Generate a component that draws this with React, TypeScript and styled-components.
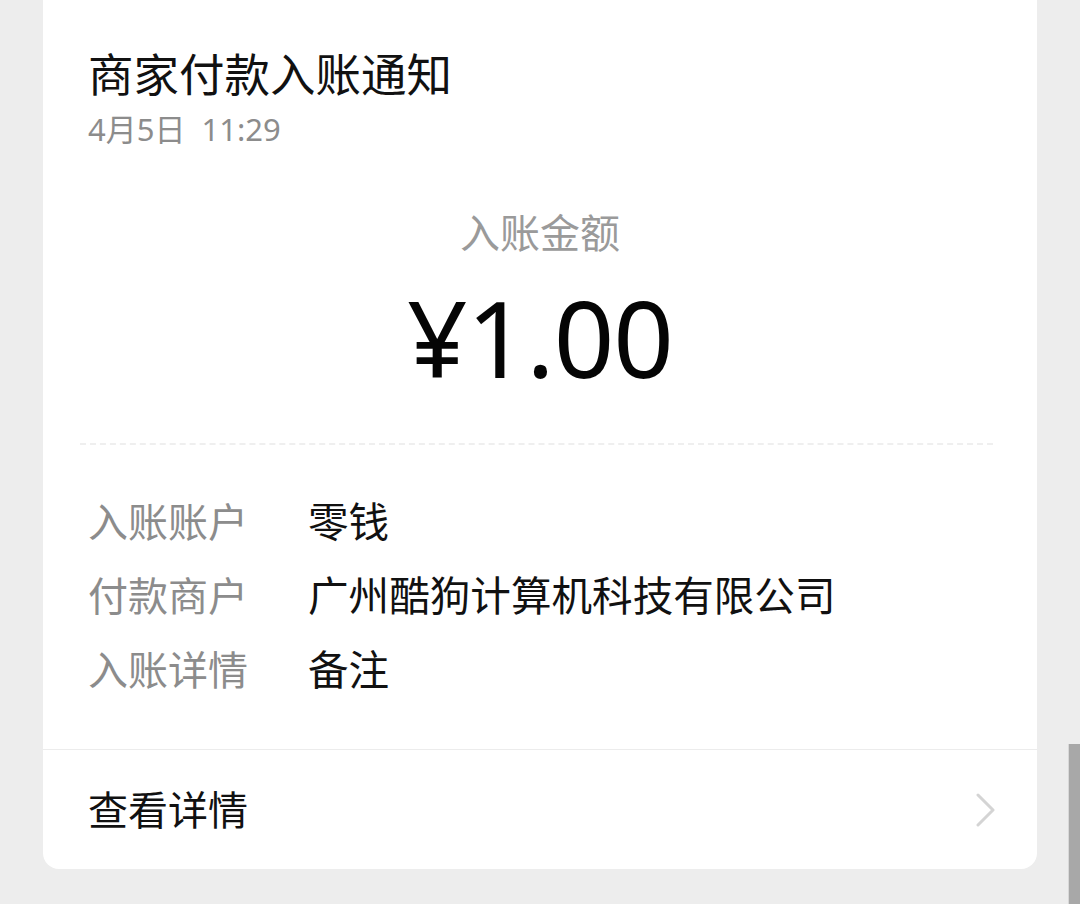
import React from "react";
import styled, { createGlobalStyle } from "styled-components";

const GlobalStyle = createGlobalStyle`
  html, body {
    margin: 0;
    padding: 0;
    background: #ededed;
  }
  body {
    font-family: "Noto Sans", "Noto Sans CJK SC", sans-serif;
    -webkit-font-smoothing: antialiased;
  }
`;

interface Detail {
  label: string;
  value: string;
}

const details: Detail[] = [
  { label: "入账账户", value: "零钱" },
  { label: "付款商户", value: "广州酷狗计算机科技有限公司" },
  { label: "入账详情", value: "备注" },
];

const ChevronRight = () => (
  <svg width="22" height="34" viewBox="0 0 22 34" fill="none">
    <path d="M3 2 L18 17 L3 32" stroke="#d4d4d4" strokeWidth="3" strokeLinecap="round" strokeLinejoin="round" />
  </svg>
);

const App = () => {
  return (
    <Page>
      <GlobalStyle />
      <Card>
        <Header>
          <Title>商家付款入账通知</Title>
          <DateText>4月5日&nbsp;&nbsp;11:29</DateText>
        </Header>
        <AmountBlock>
          <AmountLabel>入账金额</AmountLabel>
          <Amount>¥1.00</Amount>
        </AmountBlock>
        <DashedLine />
        <DetailList>
          {details.map((d) => (
            <DetailRow key={d.label}>
              <DetailLabel>{d.label}</DetailLabel>
              <DetailValue>{d.value}</DetailValue>
            </DetailRow>
          ))}
        </DetailList>
        <Footer>
          <FooterText>查看详情</FooterText>
          <ChevronRight />
        </Footer>
      </Card>
      <ScrollThumb />
    </Page>
  );
};

const Page = styled.div`
  position: relative;
  min-height: 904px;
  padding: 0 43px;
  overflow: hidden;
  box-sizing: border-box;
`;

const Card = styled.div`
  background: #ffffff;
  border-radius: 16px;
  margin-top: -16px;
  display: flex;
  flex-direction: column;
`;

const Header = styled.div`
  display: flex;
  flex-direction: column;
  padding: 62px 45px 0;
`;

const Title = styled.div`
  font-size: 45.5px;
  line-height: 56px;
  color: #111111;
`;

const DateText = styled.div`
  font-size: 31px;
  line-height: 40px;
  color: #8c8c8c;
  margin-top: 7px;
`;

const AmountBlock = styled.div`
  display: flex;
  flex-direction: column;
  align-items: center;
  padding-top: 59px;
`;

const AmountLabel = styled.div`
  font-size: 40px;
  line-height: 50px;
  color: #9a9a9a;
`;

const Amount = styled.div`
  font-family: "Noto Sans", sans-serif;
  font-size: 106px;
  line-height: 130px;
  letter-spacing: -1px;
  color: #050505;
  margin-top: 14px;
`;

const DashedLine = styled.div`
  margin: 41px 44px 0 37px;
  border-top: 2px dashed #efefef;
`;

const DetailList = styled.div`
  display: flex;
  flex-direction: column;
  padding: 52px 45px 54px;
  gap: 24px;
`;

const DetailRow = styled.div`
  display: grid;
  grid-template-columns: 220px 1fr;
  align-items: center;
  font-size: 40px;
  line-height: 50px;
`;

const DetailLabel = styled.div`
  color: #8c8c8c;
`;

const DetailValue = styled.div`
  color: #111111;
  font-size: 40.6px;
`;

const Footer = styled.div`
  height: 119px;
  border-top: 1px solid #ececec;
  display: flex;
  align-items: center;
  justify-content: space-between;
  padding: 0 40px 0 45px;
`;

const FooterText = styled.div`
  font-size: 40px;
  line-height: 50px;
  color: #111111;
`;

const ScrollThumb = styled.div`
  position: absolute;
  right: 0;
  top: 744px;
  width: 11px;
  height: 170px;
  background: #a8a8a8;
  border-left: 1px solid #d8d8d8;
`;

export default App;
